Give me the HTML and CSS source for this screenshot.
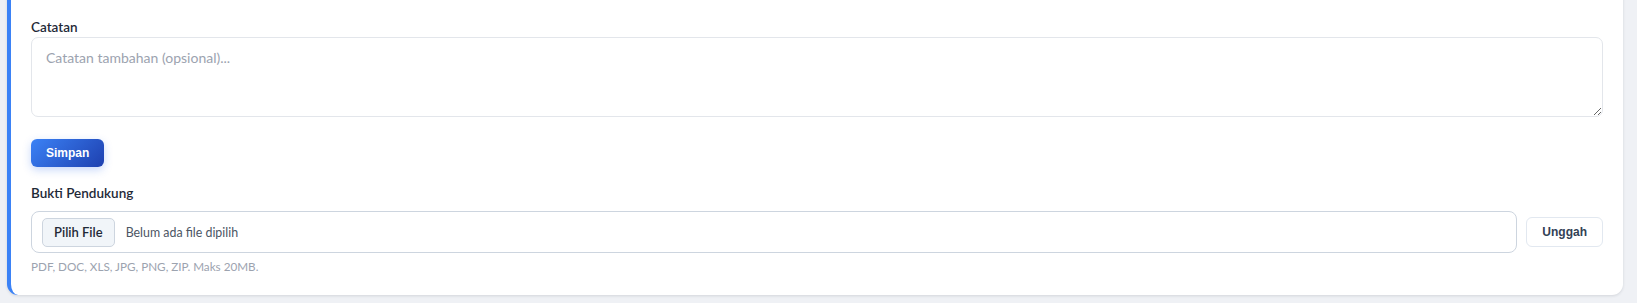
FILE: index.html
```html
<!DOCTYPE html>
<html lang="id">
<head>
<meta charset="utf-8">
<title>Catatan</title>
<link rel="stylesheet" href="styles.css">
</head>
<body>
<div class="card">
  <label class="label" for="catatan">Catatan</label>
  <textarea id="catatan" class="textarea" placeholder="Catatan tambahan (opsional)..."></textarea>
  <button class="btn-primary" type="button">Simpan</button>

  <div class="label label-bukti">Bukti Pendukung</div>
  <div class="upload-row">
    <div class="file-box">
      <span class="file-btn">Pilih File</span>
      <span class="file-name">Belum ada file dipilih</span>
    </div>
    <button class="btn-outline" type="button">Unggah</button>
  </div>
  <div class="hint">PDF, DOC, XLS, JPG, PNG, ZIP. Maks 20MB.</div>
</div>
</body>
</html>
```

FILE: styles.css
```css
* { box-sizing: border-box; }
html, body { height: 100%; }
body {
  margin: 0;
  padding: 0 14px 0 7px;
  background: #eff1f5;
  font-family: Lato, "Noto Sans", sans-serif;
  overflow: hidden;
}
.card {
  margin-top: -10px;
  background: #ffffff;
  border-left: 4px solid #3b82f6;
  border-radius: 0 0 11px 11px;
  padding: 28px 20px 21px 20px;
  box-shadow: 0 1px 3px rgba(15, 23, 42, 0.12);
  display: flex;
  flex-direction: column;
  align-items: flex-start;
}
.label {
  display: block;
  font-size: 13.5px;
  line-height: 18px;
  font-weight: 600;
  color: #1f2937;
  margin-bottom: 1px;
}
.textarea {
  display: block;
  width: 100%;
  height: 80px;
  border: 1px solid #e3e6eb;
  border-radius: 7px;
  padding: 10px 14px;
  font-family: inherit;
  font-size: 14px;
  line-height: 20px;
  color: #1f2937;
  resize: vertical;
  outline: none;
}
.textarea::placeholder { color: #9ca3af; }
.btn-primary {
  margin-top: 22px;
  height: 28px;
  padding: 0 15px;
  border: none;
  border-radius: 6px;
  background: linear-gradient(135deg, #3b82f6 0%, #1e40af 100%);
  color: #ffffff;
  font-family: "Liberation Sans", Arial, sans-serif;
  font-weight: 700;
  font-size: 12px;
  box-shadow: 0 3px 8px rgba(37, 99, 235, 0.25);
  cursor: pointer;
}
.label-bukti {
  margin-top: 17px;
  margin-bottom: 9px;
}
.upload-row {
  width: 100%;
  display: flex;
  align-items: center;
  gap: 9px;
}
.file-box {
  flex: 1;
  height: 42px;
  border: 1px solid #cdd5df;
  border-radius: 8px;
  padding: 0 10px;
  display: flex;
  align-items: center;
  gap: 11px;
}
.file-btn {
  height: 29px;
  padding: 0 11px;
  display: flex;
  align-items: center;
  background: #f1f5f9;
  border: 1px solid #cdd5df;
  border-radius: 5px;
  font-size: 13px;
  font-weight: 600;
  color: #1f2937;
}
.file-name {
  font-size: 12.4px;
  color: #4b5563;
}
.btn-outline {
  height: 30px;
  padding: 0 15px;
  background: #ffffff;
  border: 1px solid #e2e8f0;
  border-radius: 6px;
  font-family: "Liberation Sans", Arial, sans-serif;
  font-weight: 700;
  font-size: 12px;
  color: #334155;
  cursor: pointer;
}
.hint {
  margin-top: 5px;
  font-size: 11.7px;
  line-height: 16px;
  color: #9ca3af;
}
```
